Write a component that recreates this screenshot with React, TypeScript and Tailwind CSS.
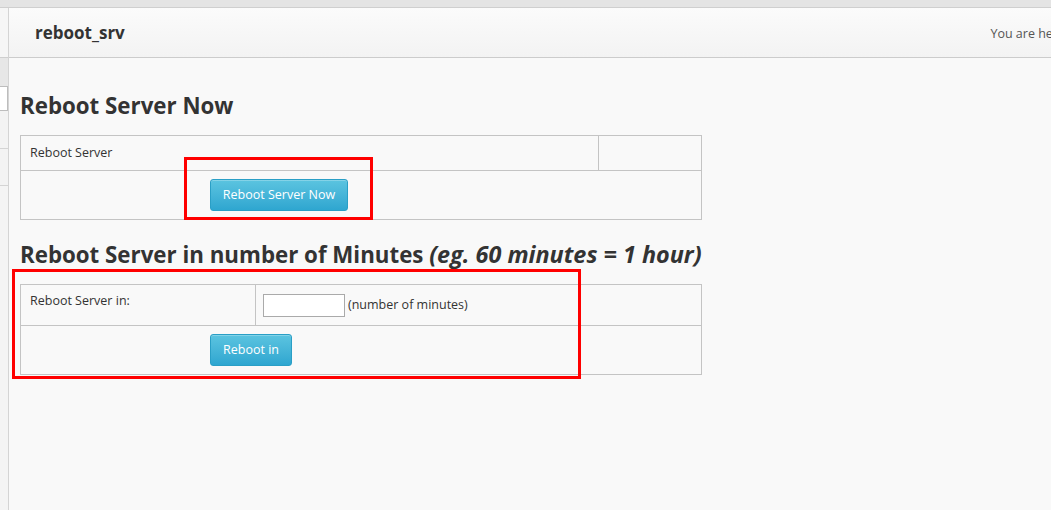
import React from 'react';

const btn =
  'rounded-[3px] border border-[#2a9fc6] bg-gradient-to-b from-[#5bc4e0] to-[#2ea6d0] text-white text-[12.5px] leading-none shadow-[inset_0_1px_0_rgba(255,255,255,0.25)]';

export default function App() {
  return (
    <div className="w-[1051px] h-[510px] overflow-hidden bg-[#f9f9f9] font-['Open_Sans',sans-serif] text-[#333]">
      <div className="h-[8px] bg-[#e4e4e4] border-b border-[#cfcfcf]" />
      <div className="flex h-[502px]">
        {/* left sidebar strip */}
        <div className="w-[9px] shrink-0 flex flex-col border-r border-[#d4d4d4] bg-[#f4f4f4]">
          <div className="h-[50px] border-b border-[#cfcfcf] bg-[#f6f6f6]" />
          <div className="h-[28px] bg-[#e7e7e7]" />
          <div className="h-[25px] bg-white border border-l-0 border-[#bdbdbd]" />
          <div className="h-[38px] bg-[#f3f3f3] border-b border-[#d4d4d4]" />
          <div className="h-[37px] bg-[#f3f3f3] border-b border-[#d4d4d4]" />
          <div className="flex-1" />
        </div>

        <div className="flex-1 flex flex-col min-w-0">
          <div className="h-[50px] shrink-0 flex items-center justify-between border-b border-[#cccccc] bg-gradient-to-b from-[#fbfbfb] to-[#f3f3f3] pl-[26px]">
            <span className="text-[17px] font-bold text-[#333]">reboot_srv</span>
            <span className="mt-[3px] text-[12.5px] text-[#555] whitespace-nowrap -mr-[14px]">You are here</span>
          </div>

          <div className="relative flex-1 pl-[11px]">
            <h2 className="mt-[34px] text-[22.3px] leading-[28px] font-bold text-[#333]">Reboot Server Now</h2>
            <div className="mt-[15px] w-[682px] border border-[#c4c4c4] text-[12.5px]">
              <div className="flex h-[35px] border-b border-[#c4c4c4]">
                <div className="w-[578px] border-r border-[#c4c4c4] pl-[9px] pt-[8px]">Reboot Server</div>
                <div className="flex-1" />
              </div>
              <div className="h-[48px] pl-[189px] pt-[8px]">
                <button className={`${btn} w-[138px] h-[32px]`}>Reboot Server Now</button>
              </div>
            </div>

            <h2 className="mt-[19px] text-[22.3px] leading-[30px] font-bold text-[#333] whitespace-nowrap">
              Reboot Server in number of Minutes <i className="text-[23.4px]">(eg. 60 minutes = 1 hour)</i>
            </h2>
            <div className="mt-[14px] w-[682px] border border-[#c4c4c4] text-[12.5px]">
              <div className="flex h-[41px] border-b border-[#c4c4c4]">
                <div className="w-[235px] border-r border-[#c4c4c4] pl-[9px] pt-[7px]">Reboot Server in:</div>
                <div className="flex-1 flex items-center pl-[7px]">
                  <input type="text" className="w-[82px] h-[23px] border border-[#aaaaaa] bg-white outline-none" />
                  <span className="ml-[3px]">(number of minutes)</span>
                </div>
              </div>
              <div className="h-[48px] pl-[189px] pt-[8px]">
                <button className={`${btn} w-[82px] h-[32px]`}>Reboot in</button>
              </div>
            </div>

            {/* annotation boxes */}
            <div className="absolute left-[175px] top-[99px] w-[189px] h-[63px] border-[3px] border-[#ff0000]" />
            <div className="absolute left-[3px] top-[211px] w-[569px] h-[110px] border-[3px] border-[#ff0000]" />
          </div>
        </div>
      </div>
    </div>
  );
}
